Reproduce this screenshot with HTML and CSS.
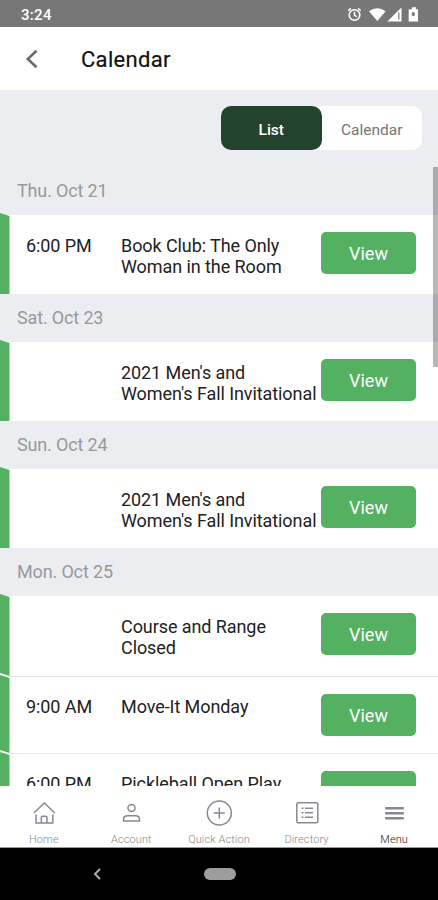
FILE: index.html
```html
<!DOCTYPE html>
<html lang="en">
  <head>
    <meta charset="UTF-8" />
    <meta name="viewport" content="width=device-width, initial-scale=1.0" />
    <title>Calendar</title>
    <link rel="stylesheet" href="styles.css">
  </head>
  <body>
    <div class="statusbar">
      <span class="clock">3:24</span>
      <svg class="status-icons" width="74" height="18" viewBox="0 0 74 18">
        <g fill="none" stroke="#fff" stroke-width="1.6">
          <circle cx="8.500" cy="9" r="5.300" />
          <path d="M8.500 5.800v3.500l2.400 1.400M2.300 4.600l2.600-2.200M14.700 4.600l-2.600-2.200" stroke-width="1.4" />
        </g>
        <path fill="#fff" d="M23 5.200q8.300-6 16.600 0L31.300 15z" />
        <path fill="#fff" d="M55.500 1.500V15.500H41.300z" />
        <path stroke="#777" stroke-width="1.2" d="M52.800 6.500v7" />
        <path fill="#fff" d="M64 3.200h2V1.200h4v2h2V15.500H62.700V3.200z" />
        <path fill="#777" d="M65.800 6.300h3v3.500h-3z" />
      </svg>
    </div>

    <header class="topbar">
      <svg class="back" width="14" height="20" viewBox="0 0 14 20">
        <path d="M11.500 1.800L2.800 10l8.700 8.200" />
      </svg>
      <h1>Calendar</h1>
    </header>

    <main>
      <div class="toggle">
        <button class="valgt">List</button>
        <button>Calendar</button>
      </div>

      <h2>Thu. Oct 21</h2>
      <article>
        <div class="stripe"></div>
        <p class="time">6:00 PM</p>
        <p class="title">Book Club: The Only<br>Woman in the Room</p>
        <button class="view">View</button>
      </article>

      <h2>Sat. Oct 23</h2>
      <article>
        <div class="stripe"></div>
        <p class="time"></p>
        <p class="title">2021 Men's and<br>Women's Fall Invitational</p>
        <button class="view">View</button>
      </article>

      <h2>Sun. Oct 24</h2>
      <article>
        <div class="stripe"></div>
        <p class="time"></p>
        <p class="title">2021 Men's and<br>Women's Fall Invitational</p>
        <button class="view">View</button>
      </article>

      <h2>Mon. Oct 25</h2>
      <article class="lined">
        <div class="stripe"></div>
        <p class="time"></p>
        <p class="title">Course and Range<br>Closed</p>
        <button class="view">View</button>
      </article>
      <article class="lined short">
        <div class="stripe"></div>
        <p class="time">9:00 AM</p>
        <p class="title">Move-It Monday</p>
        <button class="view">View</button>
      </article>
      <article>
        <div class="stripe"></div>
        <p class="time">6:00 PM</p>
        <p class="title">Pickleball Open Play</p>
        <button class="view">View</button>
      </article>

      <div class="scrollbar"></div>
    </main>

    <nav>
      <a>
        <svg width="28" height="28" viewBox="0 0 28 28">
          <path d="M3.800 14L14.300 4l10.500 10M6 15.500v8.500h16.800v-8.500M11.300 24v-5.500q0-1.200 1.200-1.200h3.300q1.200 0 1.200 1.200V24" />
        </svg>
        <span>Home</span>
      </a>
      <a>
        <svg width="28" height="28" viewBox="0 0 28 28">
          <circle cx="14.500" cy="9" r="3.500" />
          <path d="M6.500 22v-1.600q0-3.700 4-3.700h8q4 0 4 3.700V22z" />
        </svg>
        <span>Account</span>
      </a>
      <a>
        <svg width="28" height="28" viewBox="0 0 28 28">
          <circle cx="14.300" cy="14" r="12" />
          <path d="M14.300 8.500v11M8.800 14h11" />
        </svg>
        <span>Quick Action</span>
      </a>
      <a>
        <svg width="28" height="28" viewBox="0 0 28 28">
          <rect x="3.800" y="3.800" width="21" height="20" rx="1.500" />
          <path d="M8.500 9.300h2M8.500 13.800h2M8.500 18.300h2M12 9.300h8M12 13.800h8M12 18.300h8" />
        </svg>
        <span>Directory</span>
      </a>
      <a class="current">
        <svg width="28" height="28" viewBox="0 0 28 28">
          <path stroke-width="2.400" d="M5.200 9.200h18.600M5.200 14.200h18.600M5.200 19.200h18.600" />
        </svg>
        <span>Menu</span>
      </a>
    </nav>

    <footer>
      <svg width="8" height="12" viewBox="0 0 8 12">
        <path d="M7 1L2 6l5 5" />
      </svg>
      <div class="pill"></div>
    </footer>
  </body>
</html>
```

FILE: styles.css
```css
* {
  box-sizing: border-box;
}
body {
  margin: 0;
  height: 900px;
  display: flex;
  flex-direction: column;
  overflow: hidden;
  font-family: Roboto, "Liberation Sans", sans-serif;
  background-color: white;
}
h1,
h2,
p {
  margin: 0;
  font-weight: 400;
}
button {
  border: none;
  padding: 0;
  font-family: inherit;
}

.statusbar {
  flex: none;
  height: 27px;
  background-color: #777;
  display: flex;
  align-items: center;
  justify-content: space-between;
  padding: 2px 18px 0 21px;
}
.clock {
  color: white;
  font-size: 15px;
  font-weight: 500;
  letter-spacing: 0.3px;
}

.topbar {
  flex: none;
  height: 63px;
  display: flex;
  align-items: center;
  padding: 1px 0 0 25px;
}
.back {
  fill: none;
  stroke: #6b6b6b;
  stroke-width: 2.6;
}
h1 {
  margin-left: 42px;
  padding-top: 1px;
  font-size: 22px;
  letter-spacing: 0.3px;
  color: #111;
  -webkit-text-stroke: 0.2px #111;
}

main {
  position: relative;
  flex: none;
  height: 696px;
  overflow: hidden;
  background-color: #ecedf1;
}
.toggle {
  display: flex;
  width: 201px;
  height: 44px;
  margin: 16px 16px 17px auto;
  border-radius: 11px;
  background-color: white;
}
.toggle button {
  flex: 1;
  border-radius: 10px;
  padding-top: 3px;
  background-color: white;
  color: #757575;
  font-size: 15.5px;
}
.toggle .valgt {
  background-color: #24432f;
  color: white;
  font-weight: 500;
}

h2 {
  height: 48px;
  padding-left: 17px;
  line-height: 48px;
  font-size: 18px;
  letter-spacing: -0.15px;
  color: #97999e;
}
article {
  display: flex;
  align-items: flex-start;
  height: 79px;
  background-color: white;
  font-size: 18px;
  line-height: 21px;
  letter-spacing: -0.08px;
  color: #222;
}
.stripe {
  align-self: stretch;
  width: 9.5px;
  margin-top: -2px;
  background-color: #54b162;
  clip-path: polygon(0 0, 100% 3px, 100% 100%, 0 100%);
}
/* leaves a thin white wedge between two stripes */
.lined .stripe {
  clip-path: polygon(0 0, 100% 3px, 100% 100%, 0 calc(100% - 3px));
}
.time {
  width: 95px;
  margin: 20px 0 0 16.5px;
}
.title {
  width: 200px;
  margin-top: 20px;
  white-space: nowrap;
}
.view {
  width: 95px;
  height: 42px;
  margin-top: 17px;
  border-radius: 5px;
  padding-top: 1px;
  background-color: #54b162;
  color: white;
  font-size: 18px;
}
.lined {
  height: 81px;
  border-bottom: 1px solid #e6e6e8;
}
.short {
  height: 77px;
}
.lined + article p {
  margin-top: 19px;
}
.scrollbar {
  position: absolute;
  right: 0;
  top: 77px;
  width: 5px;
  height: 200px;
  background-color: rgba(0, 0, 0, 0.28);
}

nav {
  flex: none;
  height: 62px;
  display: flex;
  padding-top: 13px;
  border-bottom: 1px solid #999;
}
nav a {
  flex: 1;
  display: flex;
  flex-direction: column;
  align-items: center;
  gap: 6px;
  font-size: 11px;
  font-weight: 300;
  line-height: 14px;
  letter-spacing: 0.1px;
  color: #888;
}
nav svg {
  fill: none;
  stroke: #858991;
  stroke-width: 1.5;
}
nav .current {
  color: #222;
}

footer {
  flex: 1;
  background-color: black;
  display: flex;
  align-items: center;
  padding-left: 93px;
}
footer svg {
  fill: none;
  stroke: #aaa;
  stroke-width: 2;
}
.pill {
  width: 32px;
  height: 12px;
  margin-left: 103px;
  border-radius: 6px;
  background-color: #9d9d9d;
}
```
